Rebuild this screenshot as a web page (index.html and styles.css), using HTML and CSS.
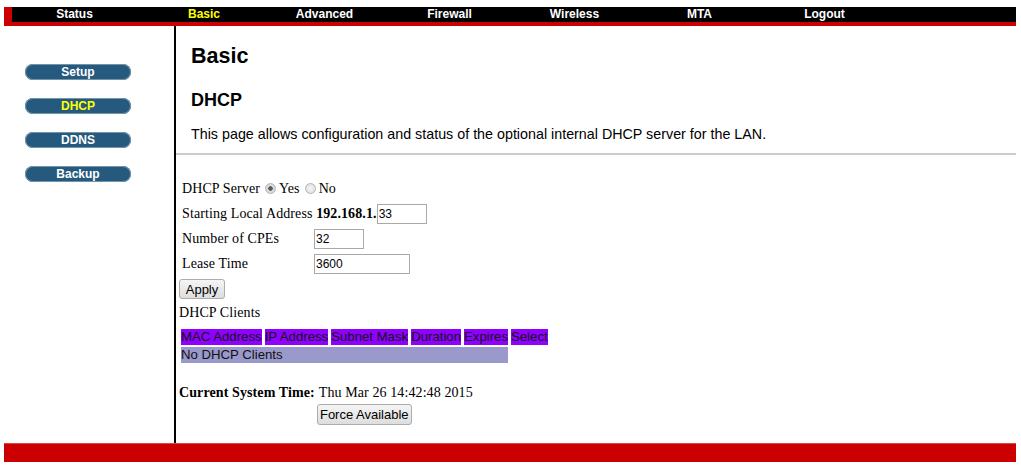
FILE: index.html
```html
<!DOCTYPE html>
<html>
<head>
<meta charset="utf-8">
<title>Basic - DHCP</title>
<link rel="stylesheet" href="styles.css">
</head>
<body>
<div class="page">
  <div class="topnav">
    <a class="nav-item">Status</a>
    <a class="nav-item active">Basic</a>
    <a class="nav-item">Advanced</a>
    <a class="nav-item">Firewall</a>
    <a class="nav-item">Wireless</a>
    <a class="nav-item">MTA</a>
    <a class="nav-item">Logout</a>
  </div>
  <div class="main">
    <div class="sidebar">
      <a class="side-btn">Setup</a>
      <a class="side-btn active">DHCP</a>
      <a class="side-btn">DDNS</a>
      <a class="side-btn">Backup</a>
    </div>
    <div class="content">
      <div class="header">
        <h1 class="title">Basic</h1>
        <h2 class="subtitle">DHCP</h2>
        <p class="desc">This page allows configuration and status of the optional internal DHCP server for the LAN.</p>
      </div>
      <div class="rule"></div>
      <div class="form">
        <div class="row">
          <span>DHCP Server</span>
          <label class="radio-label"><input type="radio" name="srv" class="radio" checked>Yes</label>
          <label class="radio-label"><input type="radio" name="srv" class="radio">No</label>
        </div>
        <div class="row">
          <span>Starting Local Address&nbsp;</span><b class="ip">192.168.1.</b><input class="field w-small" type="text" value="33">
        </div>
        <div class="row">
          <span class="label">Number of CPEs</span><input class="field w-small" type="text" value="32">
        </div>
        <div class="row">
          <span class="label">Lease Time</span><input class="field w-large" type="text" value="3600">
        </div>
        <button class="btn apply">Apply</button>
        <div class="clients-title">DHCP Clients</div>
        <table class="clients">
          <tr class="head">
            <td>MAC Address</td><td>IP Address</td><td>Subnet Mask</td><td>Duration</td><td>Expires</td><td>Select</td>
          </tr>
          <tr class="empty">
            <td colspan="5">No DHCP Clients</td>
          </tr>
        </table>
        <div class="time">
          <b class="time-label">Current System Time:</b>
          <span class="time-value">Thu Mar 26 14:42:48 2015</span>
          <span></span>
          <button class="btn force">Force Available</button>
        </div>
      </div>
    </div>
  </div>
  <div class="footer"></div>
</div>
</body>
</html>
```
FILE: styles.css
```css
html, body {
  margin: 0;
  padding: 0;
  background: #fff;
}
.page {
  padding: 7px 5px 0 4px;
  font-family: "Liberation Serif", "Times New Roman", serif;
  font-size: 14px;
  color: #000;
}
.topnav {
  display: flex;
  height: 15px;
  background: #000;
  border-left: 8px solid #cc0000;
  border-bottom: 4px solid #cc0000;
}
.nav-item {
  width: 125px;
  text-align: center;
  font-family: "Liberation Sans", Arial, sans-serif;
  font-weight: bold;
  font-size: 12px;
  line-height: 15px;
  color: #fff;
}
.nav-item.active {
  color: #ffff00;
  padding-left: 9px;
  width: 116px;
}
.main {
  display: flex;
  height: 417px;
}
.sidebar {
  border-right: 2px solid #000;
  display: flex;
  flex-direction: column;
  align-items: flex-start;
  gap: 18px;
  padding: 38px 0 0 21px;
  box-sizing: border-box;
  width: 172px;
}
.side-btn {
  display: block;
  width: 106px;
  height: 16px;
  border-radius: 8px;
  background: #255a7e;
  box-shadow: inset 0 0 0 1px #7394a8;
  text-align: center;
  font-family: "Liberation Sans", Arial, sans-serif;
  font-weight: bold;
  font-size: 12px;
  line-height: 16px;
  color: #fff;
}
.side-btn.active {
  color: #ffff00;
}
.content {
  flex: 1;
}
.header {
  padding-left: 15px;
  font-family: "Liberation Sans", Arial, sans-serif;
}
.title {
  margin: 18px 0 0;
  font-size: 21.5px;
  line-height: 24px;
  font-weight: bold;
}
.subtitle {
  margin: 22px 0 0;
  font-size: 18px;
  line-height: 20px;
  font-weight: bold;
}
.desc {
  margin: 16px 0 0;
  font-size: 14.3px;
  line-height: 16px;
}
.rule {
  height: 2px;
  background: #cccccc;
  margin-top: 11px;
}
.form {
  padding: 21px 0 0 3px;
  letter-spacing: 0.1px;
}
.row {
  display: flex;
  align-items: center;
  height: 25px;
  padding-left: 3px;
  white-space: nowrap;
}
.label {
  width: 132px;
}
.ip {
  font-weight: bold;
}
.radio-label {
  display: flex;
  align-items: center;
}
.radio {
  appearance: none;
  -webkit-appearance: none;
  width: 11px;
  height: 11px;
  margin: 0 3px 0 5px;
  border-radius: 50%;
  border: 1px solid #b4b4b4;
  background: radial-gradient(circle, #f4f4f4 0, #dcdcdc 100%);
  box-sizing: border-box;
}
.radio:checked {
  background: radial-gradient(circle, #5a5a5a 0, #5a5a5a 2px, #e0e0e0 2.5px, #d0d0d0 100%);
}
.field {
  height: 20px;
  box-sizing: border-box;
  border: 1px solid #a9a9a9;
  padding: 0 1px;
  font-family: "Liberation Sans", Arial, sans-serif;
  font-size: 12px;
  letter-spacing: 0;
  color: #000;
  margin: 0;
  outline: none;
}
.w-small {
  width: 50px;
}
.w-large {
  width: 96px;
}
.btn {
  display: block;
  font-family: "Liberation Sans", Arial, sans-serif;
  font-size: 13px;
  letter-spacing: 0;
  color: #000;
  background: linear-gradient(#f5f5f5, #dddddd);
  border: 1px solid #acacac;
  border-radius: 3px;
  padding: 0;
  box-sizing: border-box;
}
.apply {
  width: 46px;
  height: 20px;
  margin-top: 3px;
}
.clients-title {
  margin-top: 5px;
  line-height: 18px;
}
.clients {
  border-spacing: 3px 2px;
  margin-top: 5px;
  margin-left: -1px;
  font-family: "Liberation Sans", Arial, sans-serif;
  font-size: 13.2px;
  letter-spacing: 0;
}
.clients td {
  padding: 0;
  height: 16px;
  line-height: 16px;
  white-space: nowrap;
  color: #111;
}
.head td {
  background: #9000ff;
}
.empty td {
  background: #9999cc;
}
.time {
  display: grid;
  grid-template-columns: auto auto;
  justify-content: start;
  column-gap: 4px;
  margin-top: 19px;
}
.time-label {
  line-height: 18px;
}
.time-value {
  line-height: 18px;
}
.force {
  width: 95px;
  height: 21px;
  margin-top: 2px;
  margin-left: -2px;
}
.footer {
  height: 19px;
  background: #cc0000;
  border-top: 1px solid #d84a4a;
  box-sizing: border-box;
}
```
